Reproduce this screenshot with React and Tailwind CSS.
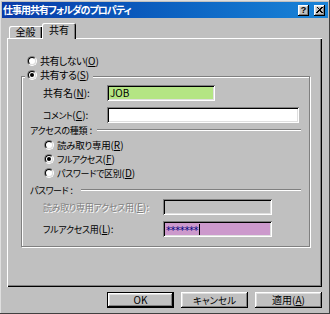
import React from "react";

// Win98 style bevels
const RAISED =
  "shadow-[inset_-1px_-1px_#000,inset_1px_1px_#fff,inset_-2px_-2px_#808080,inset_2px_2px_#dfdfdf]";
const SUNKEN =
  "shadow-[inset_1px_1px_#808080,inset_-1px_-1px_#fff,inset_2px_2px_#000,inset_-2px_-2px_#dfdfdf]";

// 日本語部分だけ小さめ・詰め気味にする（MS UI Gothic のかな幅に寄せる）
function Lbl({ jp, k, tail = "", t = "" }) {
  return (
    <span className="whitespace-nowrap">
      <span className={t}>{jp}</span>(<u>{k}</u>){tail}
    </span>
  );
}

function Radio({ checked }) {
  return (
    <div className="w-[10px] h-[10px] shrink-0 rounded-full border border-t-[#808080] border-l-[#808080] border-r-white border-b-white">
      <div className="w-full h-full rounded-full border border-t-black border-l-black border-r-[#dfdfdf] border-b-[#dfdfdf] bg-white flex items-center justify-center">
        {checked && <div className="w-[4px] h-[4px] rounded-full bg-black" />}
      </div>
    </div>
  );
}

function RadioRow({ checked, children, className = "" }) {
  return (
    <div className={"h-[14px] flex items-center gap-[3px] " + className}>
      <Radio checked={checked} />
      {children}
    </div>
  );
}

function Etched() {
  return <div className="flex-1 h-[2px] border-t border-t-[#808080] border-b border-b-white" />;
}

function Field({ w, bg, children }) {
  return (
    <div className={"h-[16px] flex items-center pl-[3px] " + SUNKEN + " " + w + " " + bg}>
      {children}
    </div>
  );
}

export default function App() {
  return (
    <div className="w-[330px] h-[314px] p-[2px] bg-[#c0c0c0] text-[10px] leading-[12px] text-black font-['Noto_Sans_CJK_JP',sans-serif] [font-feature-settings:'palt'] shadow-[inset_-1px_-1px_#404040,inset_1px_1px_#dfdfdf] overflow-hidden">
      {/* タイトルバー */}
      <div className="h-[16px] flex items-center pl-[1px] pr-[3px] bg-gradient-to-r from-[#0a3aa8] to-[#1a84d8]">
        <span className="flex-1 text-white font-bold tracking-[-1px]">仕事用共有フォルダのプロパティ</span>
        <div className={"w-[11px] h-[11px] bg-[#c0c0c0] flex items-center justify-center text-[9px] leading-[9px] font-bold font-['Liberation_Sans',sans-serif] mr-[5px] " + RAISED}>
          ?
        </div>
        <div className={"w-[11px] h-[11px] bg-[#c0c0c0] flex items-center justify-center " + RAISED}>
          <svg width="7" height="6" viewBox="0 0 7 6">
            <path d="M0 0h2v1h1v1h1V1h1V0h2v1H6v1H5v1h0v0H5v1h1v1h1v1H5V5H4V4H3v1H2v1H0V5h1V4h1V3h1V2H2V1H1V0z" fill="#000" />
            <rect x="3" y="2" width="1" height="2" fill="#000" />
          </svg>
        </div>
      </div>

      {/* タブ */}
      <div className="h-[20px] flex items-end pl-[7px]">
        <div className="w-[33px] h-[12px] flex items-center justify-center rounded-tl-[2px] shadow-[inset_1px_1px_#fff,inset_-1px_0_#000,inset_-2px_0_#808080]">
          全般
        </div>
        <div className="relative z-10 w-[34px] h-[16px] -mb-[1px] bg-[#c0c0c0] pt-[1px] flex justify-center rounded-t-[2px] shadow-[inset_1px_1px_#fff,inset_-1px_0_#000,inset_-2px_0_#808080]">
          共有
        </div>
      </div>

      {/* パネル */}
      <div className="ml-[5px] w-[315px] h-[249px] overflow-hidden shadow-[inset_1px_1px_#fff,inset_-1px_-1px_#000,inset_-2px_-2px_#808080]">
        <RadioRow className="mt-[16px] pl-[20px]">
          <Lbl jp="共有しない" k="O" t="tracking-[-0.6px]" />
        </RadioRow>

        <div className="mt-[8px] ml-[14px] w-[289px] h-[171px] border border-[#808080] shadow-[inset_1px_1px_#fff,1px_1px_#fff]">
          <div className="-mt-[9px] ml-[3px] w-fit pl-[2px] pr-[4px] bg-[#c0c0c0]">
            <RadioRow checked>
              <Lbl jp="共有する" k="S" t="tracking-[-0.4px]" />
            </RadioRow>
          </div>

          <div className="mt-[3px] h-[16px] flex items-center pl-[21px]">
            <span className="w-[64px]">
              <Lbl jp="共有名" k="N" tail=":" />
            </span>
            <Field w="w-[108px]" bg="bg-[#b4e584]">JOB</Field>
          </div>

          <div className="mt-[6px] h-[16px] flex items-center pl-[21px]">
            <span className="w-[64px]">
              <Lbl jp="コメント" k="C" tail=":" t="text-[9px] tracking-[-0.5px]" />
            </span>
            <Field w="w-[192px]" bg="bg-white" />
          </div>

          <div className="h-[14px] flex items-center pl-[8px] pr-[8px] gap-[5px]">
            <span className="whitespace-nowrap">
              <span className="text-[9px] tracking-[-0.3px]">アクセスの種類</span> :
            </span>
            <Etched />
          </div>

          <div className="mt-[1px] pl-[22px]">
            <RadioRow>
              <Lbl jp="読み取り専用" k="R" t="text-[9.5px] tracking-[-0.3px]" />
            </RadioRow>
            <RadioRow checked>
              <Lbl jp="フルアクセス" k="F" t="text-[9px] tracking-[-0.5px]" />
            </RadioRow>
            <RadioRow>
              <Lbl jp="パスワードで区別" k="D" t="text-[9px] tracking-[-0.3px]" />
            </RadioRow>
          </div>

          <div className="mt-[3px] h-[14px] flex items-center pl-[8px] pr-[8px] gap-[8px]">
            <span className="whitespace-nowrap">
              <span className="text-[9px] tracking-[-0.5px]">パスワード</span> :
            </span>
            <Etched />
          </div>

          <div className="mt-[2px] h-[16px] flex items-center pl-[21px]">
            <span className="w-[120px] text-[#808080] [text-shadow:1px_1px_0_#fff]">
              <Lbl jp="読み取り専用アクセス用" k="E" tail=":" t="text-[9px] tracking-[-0.3px]" />
            </span>
            <Field w="w-[109px]" bg="bg-[#c0c0c0]" />
          </div>

          <div className="mt-[6px] h-[16px] flex items-center pl-[21px]">
            <span className="w-[120px]">
              <Lbl jp="フルアクセス用" k="L" tail=":" t="text-[9px] tracking-[-0.3px]" />
            </span>
            <Field w="w-[109px]" bg="bg-[#cc99cc]">
              <span className="text-[#000080] font-['DejaVu_Sans',sans-serif] text-[10px] leading-[10px] tracking-[-0.4px] translate-y-[2px]">*******</span>
              <span className="ml-[1px] w-[1px] h-[11px] bg-black" />
            </Field>
          </div>
        </div>
      </div>

      {/* ボタン */}
      <div className="mt-[5px] ml-[5px] w-[315px] flex justify-end gap-[7px]">
        <div className="w-[67px] h-[16px] border border-black">
          <div className={"w-full h-full flex items-center justify-center " + RAISED}>OK</div>
        </div>
        <div className={"w-[67px] h-[16px] flex items-center justify-center " + RAISED}>
          <span className="text-[9.5px]">キャンセル</span>
        </div>
        <div className={"w-[67px] h-[16px] flex items-center justify-center " + RAISED}>
          <Lbl jp="適用" k="A" />
        </div>
      </div>
    </div>
  );
}
